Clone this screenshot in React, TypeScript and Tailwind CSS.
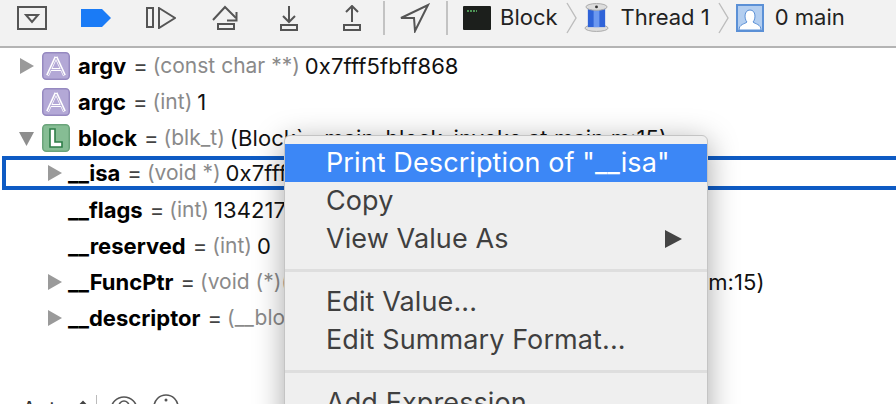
import React from "react";

const font = { fontFamily: '"Inter","Liberation Sans",sans-serif' };

function Tri({ open }: { open?: boolean }) {
  return (
    <svg width="16" height="18" viewBox="0 0 16 18" className="shrink-0">
      {open ? <path d="M0 3h15L7.5 17z" fill="#8e8e8e" /> : <path d="M1 1l14 8-14 8z" fill="#9a9a9a" />}
    </svg>
  );
}

function Badge({ letter }: { letter: "A" | "L" }) {
  const a = letter === "A";
  return (
    <svg width="28" height="28" viewBox="0 0 28 28" className="shrink-0">
      <rect x="0.75" y="0.75" width="26.5" height="26.5" rx="3.5" fill={a ? "#b3a8d6" : "#86bd94"} stroke={a ? "#9689c0" : "#6ba47b"} strokeWidth="1.5" />
      {a ? (
        <g fill="none">
          <path d="M14 5L22.5 23.5M14 5L5.5 23.5M8.5 17.5h11" stroke="#fff" strokeWidth="3" />
          <path d="M14 6L22 23.5M14 6L6 23.5M8.5 17.5h11" stroke="#a99dcf" strokeWidth="0.8" />
        </g>
      ) : (
        <path d="M8 5h5v13h7v5H8z" fill="#fff" stroke="#2f7d48" strokeWidth="1.6" />
      )}
    </svg>
  );
}

function Row({ pad, tri, open, badge, name, type, value, selected }: { pad: string; tri?: boolean; open?: boolean; badge?: "A" | "L"; name: string; type: string; value: string; selected?: boolean }) {
  return (
    <div className={`flex items-center whitespace-nowrap ${pad} ${selected ? "mb-[2px] ml-[2px] h-[34px] border-[4px] border-r-0 border-[#0e5bc4] bg-white" : "h-[36px]"}`}>
      <div className={badge ? "w-[23px]" : "w-[21px]"}>{tri ? <Tri open={open} /> : null}</div>
      {badge ? <div className="mr-[8px]"><Badge letter={badge} /></div> : null}
      <span className="font-bold text-[22px] text-black">{name}</span>
      <span className="ml-[7px] text-[22px] text-[#444]">=</span>
      <span className="ml-[5px] text-[21px] text-[#8a8a8a]">{type}</span>
      <span className="ml-[5px] text-[22px] tracking-[0.1px] text-[#111]">{value}</span>
    </div>
  );
}

function Item({ label, active, arrow }: { label: string; active?: boolean; arrow?: boolean }) {
  return (
    <div className={`flex h-[38px] items-center justify-between pl-[41px] pr-[25px] text-[27px] tracking-[0.1px] whitespace-nowrap ${active ? "bg-[#3c87f6] text-white" : "text-[#3f3f3f]"}`}>
      <span>{label}</span>
      {arrow ? <svg width="17" height="18" viewBox="0 0 17 18"><path d="M0 0l17 9-17 9z" fill="#444" /></svg> : null}
    </div>
  );
}

const Sep = () => <div className="my-[11px] h-[3px] bg-[#dedede]" />;
const Chevron = () => (
  <svg width="11" height="32" viewBox="0 0 11 32" className="shrink-0">
    <path d="M1 1l9 15-9 15" fill="none" stroke="#bdbdbd" strokeWidth="1.4" />
  </svg>
);
const Divider = () => <div className="h-[34px] w-[2px] bg-[#c3c3c3]" />;
const st = { fill: "none", stroke: "#555", strokeWidth: 2 };

export default function App() {
  return (
    <div className="relative h-[404px] w-[896px] overflow-hidden bg-white" style={font}>
      <div className="flex h-[48px] items-start border-b-2 border-[#b4b4b4] bg-[#f2f2f2]">
        <div className="flex h-[35px] items-center pl-[17px] whitespace-nowrap">
          <svg width="30" height="24" viewBox="0 0 30 24" className="mt-[1px]"><rect x="1" y="1" width="28" height="22" {...st} /><path d="M9 9h12l-6 7z" {...st} /></svg>
          <svg width="30" height="18" viewBox="0 0 30 18" className="ml-[34px]"><path d="M0 0h21l9 9-9 9H0z" fill="#1a7bf6" /></svg>
          <svg width="30" height="22" viewBox="0 0 30 22" className="ml-[35px]"><rect x="1" y="1" width="6" height="19" {...st} /><path d="M13 1l16 10-16 10z" {...st} /></svg>
          <svg width="28" height="26" viewBox="0 0 28 26" className="ml-[36px]"><path d="M1 15L13 2l11 11" {...st} /><path d="M15 15.5h9.5V7" {...st} /><rect x="6" y="19" width="16" height="5" {...st} /></svg>
          <svg width="18" height="26" viewBox="0 0 18 26" className="ml-[40px]"><path d="M9 1v16M3 11l6 6 6-6" {...st} /><rect x="1" y="20" width="16" height="5" {...st} /></svg>
          <svg width="18" height="26" viewBox="0 0 18 26" className="ml-[45px]"><path d="M9 17V1M3 7l6-6 6 6" {...st} /><rect x="1" y="20" width="16" height="5" {...st} /></svg>
          <div className="ml-[22px]"><Divider /></div>
          <svg width="30" height="30" viewBox="0 0 30 30" className="ml-[15px]"><path d="M1 15L28 2 15 28l-1-13z" {...st} /></svg>
          <div className="ml-[16px]"><Divider /></div>
          <svg width="28" height="24" viewBox="0 0 28 24" className="ml-[15px]"><rect width="28" height="24" rx="1" fill="#1c1f1c" /><path d="M4 5h10" stroke="#5fbf6a" strokeWidth="1.5" strokeDasharray="2 1" /></svg>
          <span className="ml-[9px] text-[22px] text-[#222]">Block</span>
          <div className="ml-[8px]"><Chevron /></div>
          <svg width="25" height="29" viewBox="0 0 26 30" className="ml-[7px]"><ellipse cx="13" cy="26" rx="12" ry="3.5" fill="#ddd" stroke="#aaa" /><rect x="4" y="5" width="18" height="20" fill="#2f63d8" /><rect x="10" y="5" width="6" height="20" fill="#6c98f0" /><ellipse cx="13" cy="4" rx="11" ry="3.5" fill="#ddd" stroke="#aaa" /><circle cx="13" cy="4" r="1.5" fill="#333" /></svg>
          <span className="ml-[12px] text-[22px] text-[#222]">Thread 1</span>
          <div className="ml-[8px]"><Chevron /></div>
          <svg width="28" height="28" viewBox="0 0 28 28" className="ml-[7px]"><rect x="1" y="1" width="26" height="26" fill="#b3cef0" stroke="#5b90d6" strokeWidth="2" /><path d="M3 26c0-6 6-6 8-8-3-3-3-12 3-12s6 9 3 12c2 2 8 2 8 8z" fill="#fff" stroke="#5b90d6" /></svg>
          <span className="ml-[11px] text-[22px] text-[#222]">0 main</span>
        </div>
      </div>
      <div>
        <Row pad="pl-[19px]" tri badge="A" name="argv" type="(const char **)" value="0x7fff5fbff868" />
        <Row pad="pl-[19px]" badge="A" name="argc" type="(int)" value="1" />
        <Row pad="pl-[19px]" tri open badge="L" name="block" type="(blk_t)" value="(Block`__main_block_invoke at main.m:15)" />
        <Row pad="pl-[41px]" tri selected name="__isa" type="(void *)" value="0x7fff5fbff868" />
        <Row pad="pl-[47px]" name="__flags" type="(int)" value="134217728" />
        <Row pad="pl-[47px]" name="__reserved" type="(int)" value="0" />
        <Row pad="pl-[47px]" tri name="__FuncPtr" type="(void (*)(id))" value="(Block`__main_block_invoke at main.m:15)" />
        <Row pad="pl-[47px]" tri name="__descriptor" type="(__block_descriptor *)" value="0x100002040" />
        <div className="mt-[58px] flex h-[32px] items-center pl-[22px] text-[21px] text-[#333]">
          <span>Auto</span>
          <svg width="14" height="24" viewBox="0 0 14 24" className="ml-[8px]"><path d="M2 9l5-5 5 5M2 15l5 5 5-5" fill="none" stroke="#444" strokeWidth="2" /></svg>
          <span className="ml-[6px] h-[30px] w-[1px] bg-[#bbb]" />
          <svg width="28" height="28" viewBox="0 0 28 28" className="ml-[13px]"><circle cx="14" cy="14" r="13" fill="none" stroke="#555" strokeWidth="1.6" /><path d="M9 10a5 5 0 0 1 10 0" fill="none" stroke="#555" strokeWidth="1.6" /></svg>
          <svg width="26" height="28" viewBox="0 0 26 28" className="ml-[15px] mt-[-6px]"><circle cx="13" cy="14" r="12" fill="none" stroke="#555" strokeWidth="1.6" /><circle cx="13" cy="7" r="1.5" fill="#555" /></svg>
        </div>
      </div>
      <div className="absolute left-[284px] top-[135px] h-[300px] w-[424px] rounded-t-[6px] border border-[#c4c4c4] bg-[#efefef] pt-[8px] shadow-[0_6px_30px_rgba(0,0,0,0.35)]">
        <Item label={'Print Description of "__isa"'} active />
        <Item label="Copy" />
        <Item label="View Value As" arrow />
        <Sep />
        <Item label="Edit Value..." />
        <Item label="Edit Summary Format..." />
        <Sep />
        <Item label="Add Expression..." />
      </div>
    </div>
  );
}
